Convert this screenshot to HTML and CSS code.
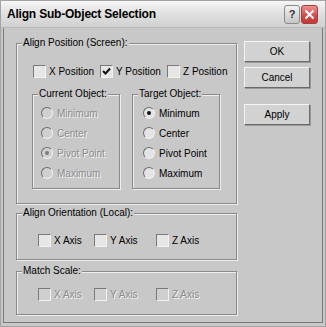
FILE: index.html
```html
<!DOCTYPE html>
<html>
<head>
<meta charset="utf-8">
<link rel="stylesheet" href="styles.css">
</head>
<body>
<div class="window">
  <div class="titlebar">
    <span class="title">Align Sub-Object Selection</span>
    <div class="tb-buttons">
      <span class="tb-btn help">?</span>
      <span class="tb-btn close"><svg width="11" height="11" viewBox="0 0 11 11"><path d="M1.5 1.5 L9.5 9.5 M9.5 1.5 L1.5 9.5" stroke="#fff" stroke-width="2" fill="none"/></svg></span>
    </div>
  </div>
  <div class="client">
    <div class="left">
      <div class="group g-pos">
        <span class="glabel">Align Position (Screen):</span>
        <div class="cbrow">
          <div class="cb w67"><span class="box"></span><span>X Position</span></div>
          <div class="cb w67"><span class="box"><svg width="9" height="9" viewBox="0 0 9 9"><path d="M1 4 L3.5 6.5 L8 1.5" stroke="#111" stroke-width="2" fill="none"/></svg></span><span>Y Position</span></div>
          <div class="cb"><span class="box"></span><span>Z Position</span></div>
        </div>
        <div class="subgroups">
          <div class="group sub cur">
            <span class="glabel">Current Object:</span>
            <div class="radio dis"><span class="rb"></span><span class="txt">Minimum</span></div>
            <div class="radio dis"><span class="rb"></span><span class="txt">Center</span></div>
            <div class="radio dis"><span class="rb on"></span><span class="txt">Pivot Point</span></div>
            <div class="radio dis"><span class="rb"></span><span class="txt">Maximum</span></div>
          </div>
          <div class="group sub tgt">
            <span class="glabel">Target Object:</span>
            <div class="radio"><span class="rb on"></span><span class="txt">Minimum</span></div>
            <div class="radio"><span class="rb"></span><span class="txt">Center</span></div>
            <div class="radio"><span class="rb"></span><span class="txt">Pivot Point</span></div>
            <div class="radio"><span class="rb"></span><span class="txt">Maximum</span></div>
          </div>
        </div>
      </div>
      <div class="group g-ori">
        <span class="glabel">Align Orientation (Local):</span>
        <div class="cbrow axes">
          <div class="cb w56"><span class="box"></span><span>X Axis</span></div>
          <div class="cb w62"><span class="box"></span><span>Y Axis</span></div>
          <div class="cb"><span class="box"></span><span>Z Axis</span></div>
        </div>
      </div>
      <div class="group g-scale">
        <span class="glabel">Match Scale:</span>
        <div class="cbrow axes">
          <div class="cb dis w56"><span class="box"></span><span class="txt">X Axis</span></div>
          <div class="cb dis w62"><span class="box"></span><span class="txt">Y Axis</span></div>
          <div class="cb dis"><span class="box"></span><span class="txt">Z Axis</span></div>
        </div>
      </div>
    </div>
    <div class="buttons">
      <div class="btn">OK</div>
      <div class="btn">Cancel</div>
      <div class="btn apply">Apply</div>
    </div>
  </div>
</div>
</body>
</html>
```

FILE: styles.css
```css
html, body {
  margin: 0;
  padding: 0;
  background: #c8c8c8;
}
body {
  font-family: "Liberation Sans", Arial, sans-serif;
  font-size: 10px;
  color: #000;
}
.window {
  width: 326px;
  height: 327px;
  box-sizing: border-box;
  border: 1px solid #a4a4a4;
  background: #c8c8c8;
  display: flex;
  flex-direction: column;
}
.titlebar {
  height: 26px;
  flex: none;
  display: flex;
  align-items: center;
  justify-content: space-between;
  padding-left: 6px;
  background: linear-gradient(#f6f6f6, #e2e2e2 45%, #d0d0d0);
  border-bottom: 1px solid #b8b8b8;
}
.title {
  font-weight: bold;
  font-size: 12px;
  letter-spacing: -0.2px;
}
.tb-buttons {
  display: flex;
  gap: 1px;
  margin-right: 7px;
}
.tb-btn {
  width: 16px;
  height: 19px;
  box-sizing: border-box;
  border-radius: 3px;
  display: flex;
  align-items: center;
  justify-content: center;
}
.help {
  border: 1px solid #8c8c8c;
  background: linear-gradient(#f2f2f2, #c6c6c6);
  font-weight: bold;
  font-size: 11px;
  color: #333;
}
.close {
  width: 17px;
  border: 1px solid #a04040;
  background: linear-gradient(#f09090, #d04848 60%, #c03838);
}
.client {
  flex: 1;
  margin: 0 2px 3px 2px;
  border: 1px solid #7a7a7a;
  border-top: none;
  display: flex;
  align-items: flex-start;
  gap: 7px;
  padding: 15px 0 0 12px;
}
.left {
  width: 221px;
  display: flex;
  flex-direction: column;
}
.group {
  position: relative;
  box-sizing: border-box;
  border: 1px solid #8a8a8a;
  box-shadow: inset 1px 1px 0 #eeeeee, 1px 1px 0 #eeeeee;
}
.glabel {
  position: absolute;
  top: -7px;
  left: 5px;
  padding: 0 1px;
  background: #c8c8c8;
  line-height: 12px;
  white-space: nowrap;
}
.g-pos {
  height: 161px;
  padding: 21px 0 0 15px;
}
.cbrow {
  display: flex;
  align-items: center;
  height: 13px;
  padding-left: 1px;
}
.cb {
  display: flex;
  align-items: center;
  gap: 3px;
  white-space: nowrap;
}
.w67 { width: 67px; }
.w56 { width: 56px; }
.w62 { width: 62px; }
.box {
  width: 13px;
  height: 13px;
  box-sizing: border-box;
  border: 1px solid;
  border-color: #7a7a7a #f2f2f2 #f2f2f2 #7a7a7a;
  background: #e6e6e6;
  display: flex;
  align-items: center;
  justify-content: center;
}
.cb.dis .box {
  background: #cfcfcf;
}
.dis .txt {
  color: #8c8c8c;
  text-shadow: 1px 1px 0 #f4f4f4;
}
.subgroups {
  display: flex;
  gap: 12px;
  margin-top: 16px;
}
.sub {
  width: 88px;
  height: 95px;
  padding-top: 8px;
}
.cur { padding-left: 8px; }
.tgt { padding-left: 10px; }
.radio {
  height: 20px;
  display: flex;
  align-items: center;
  gap: 4px;
  white-space: nowrap;
}
.rb {
  width: 12px;
  height: 12px;
  box-sizing: border-box;
  border-radius: 50%;
  border: 1px solid;
  border-color: #6e6e6e #f0f0f0 #f0f0f0 #6e6e6e;
  background: #e4e4e4;
  display: flex;
  align-items: center;
  justify-content: center;
}
.radio.dis .rb {
  background: #d0d0d0;
}
.rb.on::after {
  content: "";
  width: 4px;
  height: 4px;
  border-radius: 50%;
  background: #111;
}
.radio.dis .rb.on::after {
  background: #7a7a7a;
}
.g-ori {
  margin-top: 9px;
  height: 47px;
  padding: 20px 0 0 20px;
}
.g-scale {
  margin-top: 11px;
  height: 44px;
  padding: 16px 0 0 20px;
}
.buttons {
  display: flex;
  flex-direction: column;
  margin-top: -2px;
}
.btn {
  width: 66px;
  height: 21px;
  box-sizing: border-box;
  display: flex;
  align-items: center;
  justify-content: center;
  background: #d2d2d2;
  border: 1px solid;
  border-color: #f4f4f4 #6a6a6a #6a6a6a #f4f4f4;
  box-shadow: 1px 1px 0 #9a9a9a;
  margin-bottom: 5px;
}
.btn.apply {
  margin-top: 11px;
}
```
